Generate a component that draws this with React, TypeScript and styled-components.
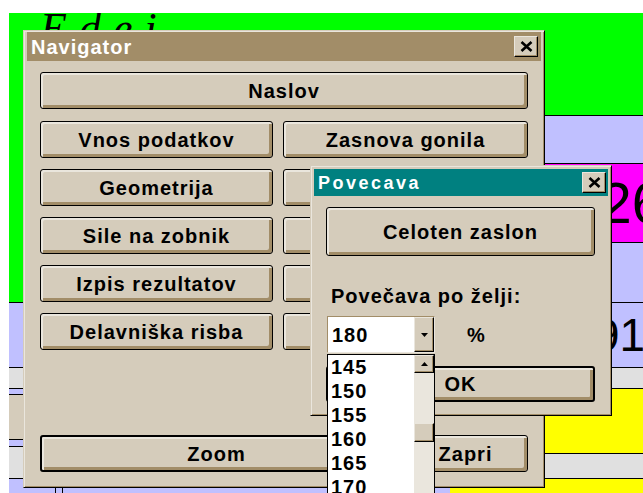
import React from "react";
import styled, { createGlobalStyle } from "styled-components";

/* Windows "Desert" colour scheme */
const C = {
  face: "#d5ccbb",
  shadow: "#a28d68",
  light: "#eae6dd",
  dark: "#000000",
  activeTitle: "#008080",
  inactiveTitle: "#a28d68",
  green: "#00ff00",
  lilac: "#c0c0ff",
  magenta: "#ff00ff",
  grey: "#e0e0e0",
  yellow: "#ffff00",
};

const UI_FONT = `"Liberation Sans", Arial, sans-serif`;

const Global = createGlobalStyle`
  html, body { margin: 0; padding: 0; background: #fff; overflow: hidden; }
  *, *::before, *::after { box-sizing: border-box; }
`;

const Screen = styled.div`
  position: relative;
  width: 643px;
  height: 493px;
  padding: 13px 0 0 9px;
  overflow: hidden;
  background: #fff;
`;

/* ---------- the main program behind the dialogs ---------- */

const Backdrop = styled.div`
  display: flex;
  height: 480px;
`;

const Column = styled.div<{ $w: number }>`
  flex: none;
  width: ${(p) => p.$w}px;
  display: flex;
  flex-direction: column;
`;

const Cell = styled.div<{ $bg: string; $h: number; $rule?: boolean }>`
  flex: none;
  height: ${(p) => p.$h}px;
  background: ${(p) => p.$bg};
  border-top: ${(p) => (p.$rule ? "1px solid #000" : "none")};
  display: flex;
  align-items: center;
  overflow: hidden;
`;

const Segment = styled.div<{ $bg: string; $w?: number; $ruled?: boolean }>`
  flex: ${(p) => (p.$w ? "none" : "1")};
  width: ${(p) => (p.$w ? `${p.$w}px` : "auto")};
  align-self: stretch;
  background: ${(p) => p.$bg};
  border-left: ${(p) => (p.$ruled ? "1px solid #000" : "none")};
  border-right: ${(p) => (p.$ruled ? "1px solid #000" : "none")};
`;

const Heading = styled.div`
  align-self: flex-start;
  padding: 1px 0 0 31px;
  font: italic 400 44px/30px "Liberation Serif", "Times New Roman", serif;
  letter-spacing: 12px;
  color: #000;
  white-space: nowrap;
`;

const BigNumber = styled.span<{ $size: number; $indent: number }>`
  padding-left: ${(p) => p.$indent}px;
  font: 400 ${(p) => p.$size}px/1 ${UI_FONT};
  color: #000;
  white-space: nowrap;
`;

/* ---------- window chrome ---------- */

const Window = styled.section<{
  $x: number;
  $y: number;
  $w: number;
  $h: number;
  $z: number;
  $pad: string;
}>`
  position: absolute;
  left: ${(p) => p.$x}px;
  top: ${(p) => p.$y}px;
  width: ${(p) => p.$w}px;
  height: ${(p) => p.$h}px;
  z-index: ${(p) => p.$z};
  padding: ${(p) => p.$pad};
  display: flex;
  flex-direction: column;
  background: ${C.face};
  border: 1px solid;
  border-color: ${C.face} #000 #000 ${C.face};
  box-shadow: inset 1px 1px 0 ${C.light}, inset -1px -1px 0 ${C.shadow};
`;

const TitleBar = styled.header<{ $active?: boolean; $h: number }>`
  flex: none;
  height: ${(p) => p.$h}px;
  display: flex;
  align-items: center;
  justify-content: space-between;
  background: ${(p) => (p.$active ? C.activeTitle : C.inactiveTitle)};
  color: #fff;
`;

const TitleText = styled.span<{ $size: number; $spacing: number }>`
  padding-left: 4px;
  font: 700 ${(p) => p.$size}px/1 ${UI_FONT};
  letter-spacing: ${(p) => p.$spacing}px;
  white-space: nowrap;
`;

const CloseBox = styled.button<{ $gap: number }>`
  flex: none;
  width: 24px;
  height: 21px;
  margin: 0 ${(p) => p.$gap}px 0 0;
  padding: 0;
  display: flex;
  align-items: center;
  justify-content: center;
  background: ${C.face};
  border: 1px solid;
  border-color: ${C.light} #000 #000 ${C.light};
  box-shadow: inset -1px -1px 0 ${C.shadow};
`;

const CloseGlyph = () => (
  <svg width="13" height="11" viewBox="0 0 13 11" aria-hidden="true">
    <path d="M1.5 1 L11.5 10 M11.5 1 L1.5 10" stroke="#000" strokeWidth="2.6" fill="none" />
  </svg>
);

const PushButton = styled.button<{ $h: number; $primary?: boolean }>`
  height: ${(p) => p.$h}px;
  margin: 0;
  padding: 0;
  display: flex;
  align-items: center;
  justify-content: center;
  background: ${C.face};
  border: ${(p) => (p.$primary ? 2 : 1)}px solid #000;
  border-radius: 3px;
  box-shadow: inset 2px 2px 0 ${C.light}, inset -3px -3px 0 ${C.shadow};
  font: 700 20px/1 ${UI_FONT};
  letter-spacing: 1px;
  color: #000;
  white-space: nowrap;
  cursor: default;
`;

/* ---------- Navigator ---------- */

const NavBody = styled.div`
  flex: 1;
  display: flex;
  flex-direction: column;
  padding: 11px 13px 12px 13px;
`;

const NavGrid = styled.div`
  margin-top: 12px;
  display: grid;
  grid-template-columns: 233px 245px;
  grid-auto-rows: 37px;
  column-gap: 10px;
  row-gap: 11px;
`;

const NavFooter = styled.div`
  margin-top: auto;
  display: grid;
  grid-template-columns: 353px 125px;
  column-gap: 10px;
`;

/* ---------- Povecava ---------- */

const ZoomBody = styled.div`
  flex: 1;
  display: flex;
  flex-direction: column;
  padding: 11px 13px 10px 12px;
`;

const FieldLabel = styled.div`
  margin-top: 29px;
  padding-left: 5px;
  font: 700 20px/23px ${UI_FONT};
  letter-spacing: 1px;
  color: #000;
  white-space: nowrap;
`;

const ComboRow = styled.div`
  margin-top: 8px;
  padding-left: 1px;
  display: flex;
  align-items: center;
`;

const Combo = styled.div`
  position: relative;
  width: 108px;
  height: 37px;
  display: flex;
  border: 1px solid;
  border-color: ${C.shadow} ${C.light} ${C.light} ${C.shadow};
`;

const ComboValue = styled.div`
  flex: 1;
  background: #fff;
  padding-left: 4px;
  display: flex;
  align-items: center;
  font: 700 20px/1 ${UI_FONT};
  letter-spacing: 1px;
  color: #000;
`;

const ArrowButton = styled.div<{ $h?: number }>`
  flex: none;
  width: 20px;
  height: ${(p) => (p.$h ? `${p.$h}px` : "auto")};
  display: flex;
  align-items: center;
  justify-content: center;
  background: ${C.face};
  border: 1px solid;
  border-color: ${C.light} #000 #000 ${C.light};
  box-shadow: inset -1px -1px 0 ${C.shadow};
`;

const Unit = styled.span`
  margin-left: 32px;
  font: 700 20px/1 ${UI_FONT};
  color: #000;
`;

const Dropdown = styled.ul`
  position: absolute;
  z-index: 5;
  top: calc(100% + 2px);
  left: -1px;
  width: 108px;
  height: 240px;
  margin: 0;
  padding: 0 20px 0 0;
  list-style: none;
  background: #fff;
  border: 1px solid #000;
  overflow: hidden;
`;

const Option = styled.li`
  height: 24px;
  padding-left: 3px;
  font: 700 20px/24px ${UI_FONT};
  letter-spacing: 1px;
  color: #000;
`;

const ScrollBar = styled.div`
  position: absolute;
  top: 0;
  right: 0;
  bottom: 0;
  width: 20px;
  display: flex;
  flex-direction: column;
  background: ${C.light};
`;

const Thumb = styled.div<{ $offset: number }>`
  flex: none;
  height: 19px;
  margin-top: ${(p) => p.$offset}px;
  background: ${C.face};
  border: 1px solid;
  border-color: ${C.light} #000 #000 ${C.light};
  box-shadow: inset -1px -1px 0 ${C.shadow};
`;

const OkRow = styled.div`
  margin-top: 13px;
  display: flex;
  flex-direction: column;
`;

const Triangle = ({ up }: { up?: boolean }) => (
  <svg width="7" height="4" viewBox="0 0 7 4" aria-hidden="true">
    <path d={up ? "M0 4 L7 4 L3.5 0 Z" : "M0 0 L7 0 L3.5 4 Z"} fill="#000" />
  </svg>
);

const zoomSteps = [145, 150, 155, 160, 165, 170, 175, 180, 185, 190];

export default function App() {
  return (
    <Screen>
      <Global />
      <Backdrop>
        <Column $w={536}>
          <Cell $bg={C.green} $h={289}>
            <Heading>Edei</Heading>
          </Cell>
          <Cell $bg={C.lilac} $h={65} $rule />
          <Cell $bg={C.grey} $h={21} $rule />
          <Cell $bg={C.lilac} $h={6} $rule />
          <Cell $bg={C.face} $h={45} $rule />
          <Cell $bg={C.lilac} $h={7} $rule />
          <Cell $bg={C.grey} $h={32} $rule />
          <Cell $bg={C.lilac} $h={15} $rule>
            <Segment $bg={C.lilac} $w={46} />
            <Segment $bg={C.lilac} $w={8} $ruled />
            <Segment $bg={C.lilac} $w={387} />
            <Segment $bg={C.yellow} />
          </Cell>
        </Column>
        <Column $w={98}>
          <Cell $bg={C.green} $h={102} />
          <Cell $bg={C.lilac} $h={48} $rule />
          <Cell $bg={C.magenta} $h={79} $rule>
            <BigNumber $size={57} $indent={55}>26</BigNumber>
          </Cell>
          <Cell $bg={C.lilac} $h={60} $rule />
          <Cell $bg={C.lilac} $h={65} $rule>
            <BigNumber $size={46} $indent={49}>91</BigNumber>
          </Cell>
          <Cell $bg={C.grey} $h={21} $rule />
          <Cell $bg={C.yellow} $h={65} $rule />
          <Cell $bg={C.grey} $h={25} $rule />
          <Cell $bg={C.yellow} $h={15} $rule />
        </Column>
      </Backdrop>

      <Window $x={23} $y={30} $w={522} $h={458} $z={1} $pad="1px 3px 3px 3px">
        <TitleBar $h={29}>
          <TitleText $size={20} $spacing={1}>Navigator</TitleText>
          <CloseBox $gap={3} aria-label="Zapri">
            <CloseGlyph />
          </CloseBox>
        </TitleBar>
        <NavBody>
          <PushButton $h={37}>Naslov</PushButton>
          <NavGrid>
            <PushButton $h={37}>Vnos podatkov</PushButton>
            <PushButton $h={37}>Zasnova gonila</PushButton>
            <PushButton $h={37}>Geometrija</PushButton>
            <PushButton $h={37} />
            <PushButton $h={37}>Sile na zobnik</PushButton>
            <PushButton $h={37} />
            <PushButton $h={37}>Izpis rezultatov</PushButton>
            <PushButton $h={37} />
            <PushButton $h={37}>Delavniška risba</PushButton>
            <PushButton $h={37} />
          </NavGrid>
          <NavFooter>
            <PushButton $h={37} $primary>Zoom</PushButton>
            <PushButton $h={37}>Zapri</PushButton>
          </NavFooter>
        </NavBody>
      </Window>

      <Window $x={310} $y={165} $w={302} $h={251} $z={2} $pad="3px">
        <TitleBar $h={27} $active>
          <TitleText $size={18} $spacing={2.5}>Povecava</TitleText>
          <CloseBox $gap={2} aria-label="Zapri">
            <CloseGlyph />
          </CloseBox>
        </TitleBar>
        <ZoomBody>
          <PushButton $h={49}>Celoten zaslon</PushButton>
          <FieldLabel>Povečava po želji:</FieldLabel>
          <ComboRow>
            <Combo>
              <ComboValue>180</ComboValue>
              <ArrowButton>
                <Triangle />
              </ArrowButton>
              <Dropdown>
                {zoomSteps.map((v) => (
                  <Option key={v}>{v}</Option>
                ))}
                <ScrollBar>
                  <ArrowButton $h={18}>
                    <Triangle up />
                  </ArrowButton>
                  <Thumb $offset={50} />
                </ScrollBar>
              </Dropdown>
            </Combo>
            <Unit>%</Unit>
          </ComboRow>
          <OkRow>
            <PushButton $h={36} $primary>OK</PushButton>
          </OkRow>
        </ZoomBody>
      </Window>
    </Screen>
  );
}
